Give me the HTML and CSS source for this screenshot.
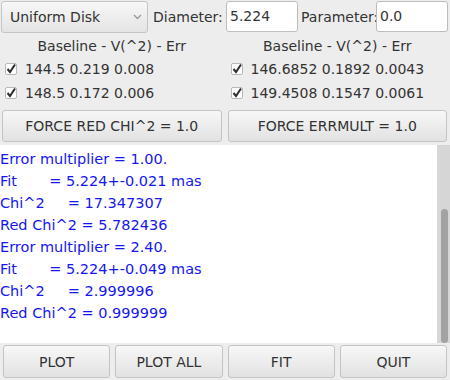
FILE: index.html
```html
<!DOCTYPE html>
<html lang="en">
<head>
  <meta charset="UTF-8">
  <title>Uniform Disk Fit</title>
  <link rel="stylesheet" href="styles.css">
</head>
<body>
  <div class="top-row">
    <div class="combo">
      <span>Uniform Disk</span>
      <svg class="combo-arrow" width="9" height="6" viewBox="0 0 9 6"><path d="M1 1 L4.5 4.5 L8 1" fill="none" stroke="#9a9a9a" stroke-width="1.4"/></svg>
    </div>
    <label class="lbl">Diameter:</label>
    <div class="field">5.224</div>
    <label class="lbl lbl-param">Parameter:</label>
    <div class="field">0.0</div>
  </div>

  <div class="cols">
    <div class="col">
      <div class="col-head">Baseline - V(^2) - Err</div>
      <div class="check-row">
        <svg class="check" width="12" height="12" viewBox="0 0 12 12"><rect x="0.5" y="0.5" width="11" height="11" rx="1.5" fill="#fff" stroke="#b8b8b8"/><path d="M2.5 6 L5 9 L10 1.5" fill="none" stroke="#2e2e2e" stroke-width="2"/></svg>
        <span>144.5 0.219 0.008</span>
      </div>
      <div class="check-row">
        <svg class="check" width="12" height="12" viewBox="0 0 12 12"><rect x="0.5" y="0.5" width="11" height="11" rx="1.5" fill="#fff" stroke="#b8b8b8"/><path d="M2.5 6 L5 9 L10 1.5" fill="none" stroke="#2e2e2e" stroke-width="2"/></svg>
        <span>148.5 0.172 0.006</span>
      </div>
      <button class="btn wide">FORCE RED CHI^2 = 1.0</button>
    </div>
    <div class="col">
      <div class="col-head">Baseline - V(^2) - Err</div>
      <div class="check-row">
        <svg class="check" width="12" height="12" viewBox="0 0 12 12"><rect x="0.5" y="0.5" width="11" height="11" rx="1.5" fill="#fff" stroke="#b8b8b8"/><path d="M2.5 6 L5 9 L10 1.5" fill="none" stroke="#2e2e2e" stroke-width="2"/></svg>
        <span>146.6852 0.1892 0.0043</span>
      </div>
      <div class="check-row">
        <svg class="check" width="12" height="12" viewBox="0 0 12 12"><rect x="0.5" y="0.5" width="11" height="11" rx="1.5" fill="#fff" stroke="#b8b8b8"/><path d="M2.5 6 L5 9 L10 1.5" fill="none" stroke="#2e2e2e" stroke-width="2"/></svg>
        <span>149.4508 0.1547 0.0061</span>
      </div>
      <button class="btn wide">FORCE ERRMULT = 1.0</button>
    </div>
  </div>

  <div class="log">
    <div class="log-text">
      <div>Error multiplier = 1.00.</div>
      <div>Fit&nbsp;&nbsp;&nbsp;&nbsp;&nbsp;&nbsp;&nbsp;= 5.224+-0.021 mas</div>
      <div>Chi^2&nbsp;&nbsp;&nbsp;&nbsp;&nbsp;= 17.347307</div>
      <div>Red Chi^2 = 5.782436</div>
      <div>Error multiplier = 2.40.</div>
      <div>Fit&nbsp;&nbsp;&nbsp;&nbsp;&nbsp;&nbsp;&nbsp;= 5.224+-0.049 mas</div>
      <div>Chi^2&nbsp;&nbsp;&nbsp;&nbsp;&nbsp;= 2.999996</div>
      <div>Red Chi^2 = 0.999999</div>
    </div>
    <div class="scroll-track">
      <div class="scroll-thumb"></div>
    </div>
  </div>

  <div class="bottom-row">
    <button class="btn">PLOT</button>
    <button class="btn">PLOT ALL</button>
    <button class="btn">FIT</button>
    <button class="btn">QUIT</button>
  </div>
</body>
</html>
```

FILE: styles.css
```css
body {
  margin: 0;
  width: 450px;
  height: 380px;
  background-color: #ededed;
  color: #333;
  font-family: "DejaVu Sans", sans-serif;
  font-size: 14px;
  overflow: hidden;
}

.top-row {
  display: flex;
  align-items: center;
  height: 33px;
  padding-left: 1px;
}

.combo {
  box-sizing: border-box;
  width: 147px;
  height: 32px;
  display: flex;
  align-items: center;
  justify-content: space-between;
  padding: 0 5px 0 8px;
  border: 1px solid #c4c4c4;
  border-radius: 3px;
  background: linear-gradient(#f7f7f7, #e4e4e4);
}

.combo-arrow {
  margin-top: 1px;
}

.lbl {
  box-sizing: border-box;
  width: 78px;
  padding-left: 5px;
}

.lbl-param {
  padding-left: 3px;
}

.field {
  box-sizing: border-box;
  width: 72px;
  height: 31px;
  line-height: 29px;
  padding-left: 3px;
  background-color: #fff;
  border: 1px solid #bdbdbd;
  border-radius: 3px;
}

.cols {
  display: flex;
  gap: 6px;
  padding: 0 3px 0 2px;
}

.col {
  flex: 1;
  display: flex;
  flex-direction: column;
}

.col-head {
  text-align: center;
  height: 24px;
  line-height: 26px;
}

.check-row {
  display: flex;
  align-items: center;
  gap: 8px;
  height: 24px;
  padding-left: 3px;
}

.btn {
  box-sizing: border-box;
  height: 32px;
  font-family: "DejaVu Sans", sans-serif;
  font-size: 14px;
  color: #333;
  border: 1px solid #c4c4c4;
  border-radius: 3px;
  background: linear-gradient(#f7f7f7, #e2e2e2);
  padding: 0;
}

.btn.wide {
  margin-top: 5px;
}

.log {
  display: flex;
  height: 198px;
  margin-top: 3px;
  background-color: #fff;
}

.log-text {
  flex: 1;
  color: #1616ee;
  font-size: 14.5px;
  line-height: 22px;
  padding-top: 3px;
  white-space: nowrap;
}

.scroll-track {
  width: 13px;
  display: flex;
  flex-direction: column;
  justify-content: flex-end;
  align-items: center;
  background-color: #d6d6d6;
}

.scroll-thumb {
  width: 7px;
  height: 134px;
  margin-left: 2px;
  border-radius: 4px;
  background-color: #a2a2a2;
}

.bottom-row {
  display: flex;
  gap: 5px;
  padding: 2px 3px 0 3px;
}

.bottom-row .btn {
  flex: 1;
  height: 33px;
}
```
